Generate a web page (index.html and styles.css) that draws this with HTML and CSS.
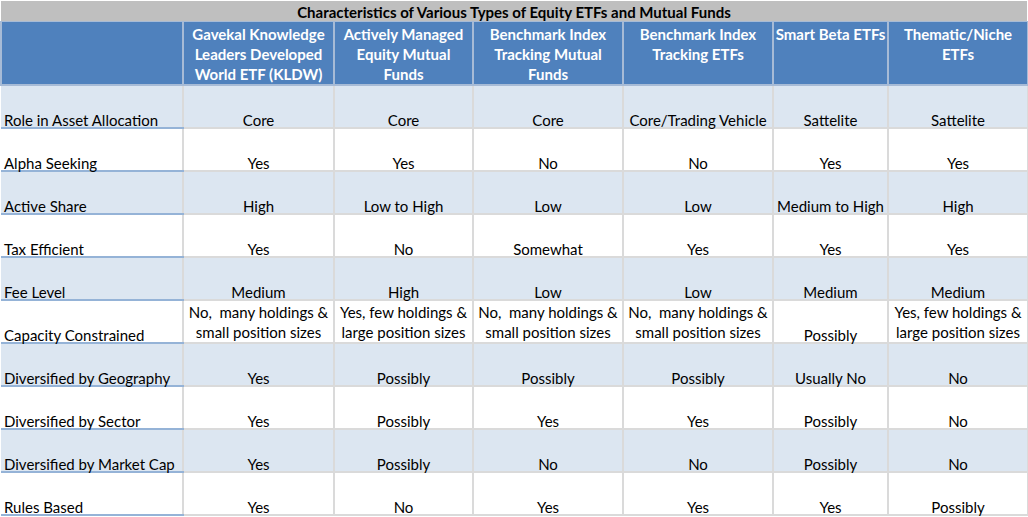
FILE: index.html
```html
<!DOCTYPE html>
<html lang="en">
<head>
<meta charset="utf-8">
<title>Characteristics of Various Types of Equity ETFs and Mutual Funds</title>
<link rel="stylesheet" href="styles.css">
</head>
<body>
<div class="sheet">
  <div class="title">Characteristics of Various Types of Equity ETFs and Mutual Funds</div>
  <table class="grid">
    <colgroup>
      <col class="c1"><col class="c2"><col class="c3"><col class="c4"><col class="c5"><col class="c6"><col class="c7">
    </colgroup>
    <thead>
      <tr class="head">
        <th></th>
        <th>Gavekal Knowledge<br>Leaders Developed<br>World ETF (KLDW)</th>
        <th>Actively Managed<br>Equity Mutual<br>Funds</th>
        <th>Benchmark Index<br>Tracking Mutual<br>Funds</th>
        <th>Benchmark Index<br>Tracking ETFs</th>
        <th>Smart Beta ETFs</th>
        <th>Thematic/Niche<br>ETFs</th>
      </tr>
    </thead>
    <tbody>
      <tr class="shade"><td>Role in Asset Allocation</td><td>Core</td><td>Core</td><td>Core</td><td>Core/Trading Vehicle</td><td>Sattelite</td><td>Sattelite</td></tr>
      <tr><td>Alpha Seeking</td><td>Yes</td><td>Yes</td><td>No</td><td>No</td><td>Yes</td><td>Yes</td></tr>
      <tr class="shade"><td>Active Share</td><td>High</td><td>Low to High</td><td>Low</td><td>Low</td><td>Medium to High</td><td>High</td></tr>
      <tr><td>Tax Efficient</td><td>Yes</td><td>No</td><td>Somewhat</td><td>Yes</td><td>Yes</td><td>Yes</td></tr>
      <tr class="shade"><td>Fee Level</td><td>Medium</td><td>High</td><td>Low</td><td>Low</td><td>Medium</td><td>Medium</td></tr>
      <tr class="multi"><td class="low">Capacity Constrained</td><td>No,&nbsp; many holdings &amp;<br>small position sizes</td><td>Yes, few holdings &amp;<br>large position sizes</td><td>No,&nbsp; many holdings &amp;<br>small position sizes</td><td>No,&nbsp; many holdings &amp;<br>small position sizes</td><td class="low">Possibly</td><td>Yes, few holdings &amp;<br>large position sizes</td></tr>
      <tr class="shade"><td>Diversified by Geography</td><td>Yes</td><td>Possibly</td><td>Possibly</td><td>Possibly</td><td>Usually No</td><td>No</td></tr>
      <tr><td>Diversified by Sector</td><td>Yes</td><td>Possibly</td><td>Yes</td><td>Yes</td><td>Possibly</td><td>No</td></tr>
      <tr class="shade"><td>Diversified by Market Cap</td><td>Yes</td><td>Possibly</td><td>No</td><td>No</td><td>Possibly</td><td>No</td></tr>
      <tr><td>Rules Based</td><td>Yes</td><td>No</td><td>Yes</td><td>Yes</td><td>Yes</td><td>Possibly</td></tr>
    </tbody>
  </table>
</div>
</body>
</html>
```
FILE: styles.css
```css
* { box-sizing: border-box; }
html, body { margin: 0; padding: 0; background: #ffffff; }
body {
  font-family: Lato, "Open Sans", "Liberation Sans", sans-serif;
  font-size: 15px;
  color: #000;
}
.sheet {
  width: 1028px;
  padding-top: 1px;
}
.title {
  margin-left: 1px;
  width: 1026px;
  height: 20px;
  background: #bfbfbf;
  font-weight: bold;
  text-align: center;
  line-height: 22px;
  white-space: nowrap;
}
.grid {
  border-collapse: collapse;
  table-layout: fixed;
  width: 1027px;
}
.c1 { width: 182px; }
.c2 { width: 151px; }
.c3 { width: 139px; }
.c4 { width: 150px; }
.c5 { width: 150px; }
.c6 { width: 115px; }
.c7 { width: 140px; }
.head th {
  height: 63px;
  background: #4f81bd;
  color: #ffffff;
  font-weight: bold;
  vertical-align: top;
  text-align: center;
  line-height: 20px;
  padding: 2px 0 0 0;
  border: 2px solid #a7bbd6;
  border-top: 1px solid #a7bbd6;
  white-space: nowrap;
}
.grid td {
  height: 43px;
  border: 2px solid #dadada;
  vertical-align: bottom;
  text-align: center;
  line-height: 14px;
  padding: 0;
  white-space: nowrap;
}
.grid .multi td {
  vertical-align: top;
  line-height: 20px;
  padding-top: 1px;
}
.grid .multi td.low {
  vertical-align: bottom;
  line-height: 14px;
  padding-top: 0;
}
.grid td:first-child {
  text-align: left;
  padding-left: 3px;
  border-bottom-color: #95b3d7;
  border-left: none;
}
.shade td { background: #dce6f1; }
```
